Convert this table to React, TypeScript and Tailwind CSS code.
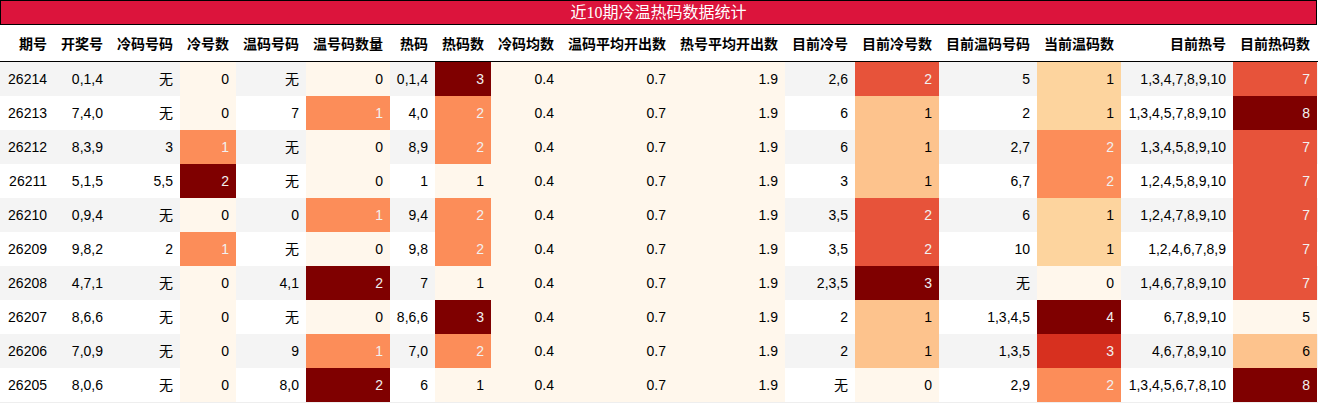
import React from "react";

type Cell = string | number;

const headers = [
  "期号", "开奖号", "冷码号码", "冷号数", "温码号码", "温号码数量", "热码", "热码数",
  "冷码均数", "温码平均开出数", "热号平均开出数", "目前冷号", "目前冷号数", "目前温码号码",
  "当前温码数", "目前热号", "目前热码数",
];

const widths = [
  "w-[54px]", "w-[56px]", "w-[70px]", "w-[56px]", "w-[70px]", "w-[84px]", "w-[45px]", "w-[56px]",
  "w-[70px]", "w-[112px]", "w-[112px]", "w-[70px]", "w-[84px]", "w-[98px]", "w-[84px]", "w-[112px]", "w-[84px]",
];

const rows: Cell[][] = [
  [26214, "0,1,4", "无", 0, "无", 0, "0,1,4", 3, "0.4", "0.7", "1.9", "2,6", 2, "5", 1, "1,3,4,7,8,9,10", 7],
  [26213, "7,4,0", "无", 0, "7", 1, "4,0", 2, "0.4", "0.7", "1.9", "6", 1, "2", 1, "1,3,4,5,7,8,9,10", 8],
  [26212, "8,3,9", "3", 1, "无", 0, "8,9", 2, "0.4", "0.7", "1.9", "6", 1, "2,7", 2, "1,3,4,5,8,9,10", 7],
  [26211, "5,1,5", "5,5", 2, "无", 0, "1", 1, "0.4", "0.7", "1.9", "3", 1, "6,7", 2, "1,2,4,5,8,9,10", 7],
  [26210, "0,9,4", "无", 0, "0", 1, "9,4", 2, "0.4", "0.7", "1.9", "3,5", 2, "6", 1, "1,2,4,7,8,9,10", 7],
  [26209, "9,8,2", "2", 1, "无", 0, "9,8", 2, "0.4", "0.7", "1.9", "3,5", 2, "10", 1, "1,2,4,6,7,8,9", 7],
  [26208, "4,7,1", "无", 0, "4,1", 2, "7", 1, "0.4", "0.7", "1.9", "2,3,5", 3, "无", 0, "1,4,6,7,8,9,10", 7],
  [26207, "8,6,6", "无", 0, "无", 0, "8,6,6", 3, "0.4", "0.7", "1.9", "2", 1, "1,3,4,5", 4, "6,7,8,9,10", 5],
  [26206, "7,0,9", "无", 0, "9", 1, "7,0", 2, "0.4", "0.7", "1.9", "2", 1, "1,3,5", 3, "4,6,7,8,9,10", 6],
  [26205, "8,0,6", "无", 0, "8,0", 2, "6", 1, "0.4", "0.7", "1.9", "无", 0, "2,9", 2, "1,3,4,5,6,7,8,10", 8],
];

const gradientCols = [3, 5, 7, 8, 9, 10, 12, 14, 16];

const scale: { at: number; cls: string }[] = [
  { at: 0, cls: "bg-[#fff7ec] text-black" },
  { at: 0.25, cls: "bg-[#fdd49e] text-black" },
  { at: 0.3333, cls: "bg-[#fdc38d] text-black" },
  { at: 0.5, cls: "bg-[#fc8d59] text-[#f1f1f1]" },
  { at: 0.6667, cls: "bg-[#e7533a] text-[#f1f1f1]" },
  { at: 0.75, cls: "bg-[#d7301f] text-[#f1f1f1]" },
  { at: 1, cls: "bg-[#7f0000] text-[#f1f1f1]" },
];

function gradientClass(col: number, v: number): string {
  const vals = rows.map((r) => Number(r[col]));
  const min = Math.min(...vals);
  const max = Math.max(...vals);
  if (max === min) return scale[0].cls;
  const n = (v - min) / (max - min);
  let best = scale[0];
  for (const s of scale) {
    if (Math.abs(s.at - n) < Math.abs(best.at - n)) best = s;
  }
  return best.cls;
}

export default function App() {
  return (
    <div
      className="w-[1318px] bg-white text-[14px] text-black"
      style={{ fontFamily: '"Liberation Sans", "Noto Sans CJK SC", sans-serif' }}
    >
      <div
        className="flex h-[25px] w-[1317px] items-center justify-center border border-black bg-[#dc143c] text-[16px] leading-none text-white"
        style={{ fontFamily: '"Liberation Serif", "Noto Sans CJK SC", serif' }}
      >
        近10期冷温热码数据统计
      </div>
      <div className="flex h-[37px] border-b border-black bg-white">
        {headers.map((h, i) => (
          <div
            key={h}
            className={`${widths[i]} flex shrink-0 items-center justify-end whitespace-nowrap px-[7px] pt-[2px] font-bold`}
          >
            {h}
          </div>
        ))}
      </div>
      <div className="border-b border-[#eeeeee]">
        {rows.map((r, ri) => (
          <div key={ri} className={`flex h-[34px] ${ri % 2 === 0 ? "bg-[#f4f4f4]" : "bg-white"}`}>
            {r.map((c, ci) => {
              const g = gradientCols.includes(ci) ? gradientClass(ci, Number(c)) : "";
              return (
                <div
                  key={ci}
                  className={`${widths[ci]} ${g} flex shrink-0 items-center justify-end whitespace-nowrap px-[7px]`}
                >
                  {c}
                </div>
              );
            })}
          </div>
        ))}
      </div>
    </div>
  );
}
